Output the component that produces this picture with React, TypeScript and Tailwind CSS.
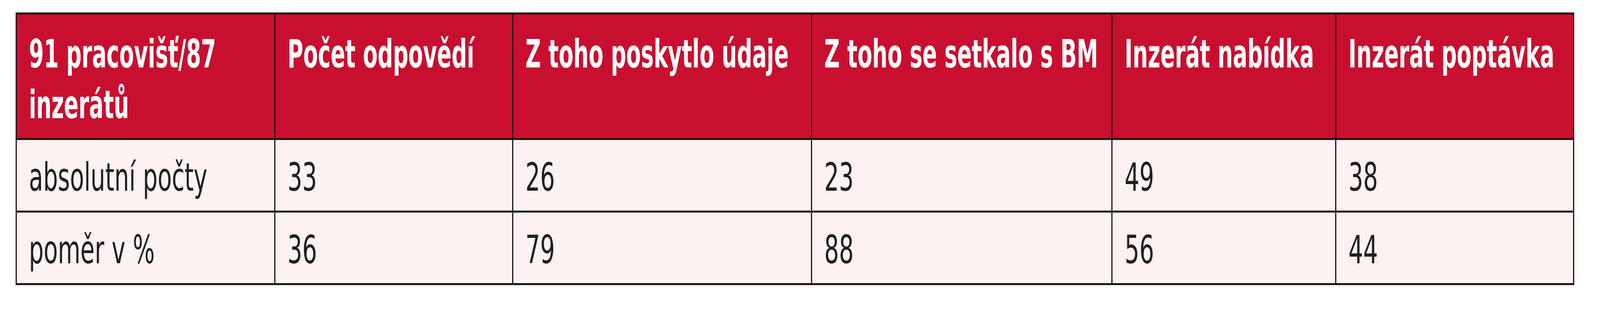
const headers = [
  "Počet odpovědí",
  "Z toho poskytlo údaje",
  "Z toho se setkalo s BM",
  "Inzerát nabídka",
  "Inzerát poptávka",
];

const rows = [
  ["absolutní počty", "33", "26", "23", "49", "38"],
  ["poměr v %", "36", "79", "88", "56", "44"],
];

// the window comes up 4096px wide, the source table is 6016px wide:
// columns are sized for 4096, text keeps its height and is narrowed with scale-x
const cell = "border-x-[3px] border-y-[5px] border-[#1c1414] align-top pl-[31px] text-left";
const font = { fontFamily: '"DejaVu Sans Condensed", "DejaVu Sans", "Liberation Sans", sans-serif' };

export default function App() {
  return (
    <div className="min-h-screen bg-white pt-[32px] pl-[40px]" style={font}>
      <table className="table-fixed border-collapse w-[3990px] font-stretch-condensed">
        <colgroup>
          <col className="w-[662px]" />
          <col className="w-[609px]" />
          <col className="w-[765px]" />
          <col className="w-[769px]" />
          <col className="w-[573px]" />
          <col className="w-[609px]" />
        </colgroup>
        <thead>
          <tr className="bg-[#c90f2f] text-white text-[100px] leading-[130px]">
            <th className={`${cell} h-[322px] pt-[37px] font-bold`}>
              <div className="origin-left scale-x-[0.61] whitespace-nowrap">
                91 pracovišť/87
                <br />
                inzerátů
              </div>
            </th>
            {headers.map((h) => (
              <th key={h} className={`${cell} h-[322px] pt-[37px] font-bold`}>
                <div className="origin-left scale-x-[0.61] whitespace-nowrap">{h}</div>
              </th>
            ))}
          </tr>
        </thead>
        <tbody>
          {rows.map((r) => (
            <tr key={r[0]} className="bg-[#fcf2f2] text-[#1f1f1f] text-[100px] leading-[130px]">
              {r.map((v, i) => (
                <td key={i} className={`${cell} h-[186px] pt-[31px]`}>
                  <div className="origin-left scale-x-[0.66] whitespace-nowrap">{v}</div>
                </td>
              ))}
            </tr>
          ))}
        </tbody>
      </table>
    </div>
  );
}
